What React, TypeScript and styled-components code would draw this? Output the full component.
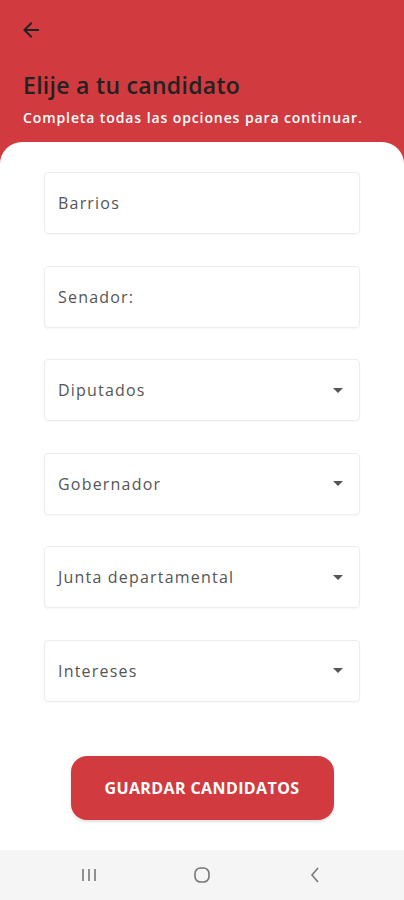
import styled, { createGlobalStyle } from 'styled-components';

const GlobalStyle = createGlobalStyle`
  * { box-sizing: border-box; }
  body {
    margin: 0;
    font-family: "Open Sans", "Liberation Sans", sans-serif;
    background: #d13b3f;
  }
`;

const fields = [
  { label: 'Barrios', select: false },
  { label: 'Senador:', select: false },
  { label: 'Diputados', select: true },
  { label: 'Gobernador', select: true },
  { label: 'Junta departamental', select: true },
  { label: 'Intereses', select: true },
];

const App = () => {
  return (
    <Screen>
      <GlobalStyle />
      <Header>
        <BackButton aria-label="Volver">
          <svg width="24" height="24" viewBox="0 0 24 24">
            <path d="M20 11H7.83l5.59-5.59L12 4l-8 8 8 8 1.41-1.41L7.83 13H20v-2z" fill="#222" />
          </svg>
        </BackButton>
        <Title>Elije a tu candidato</Title>
        <Subtitle>Completa todas las opciones para continuar.</Subtitle>
      </Header>
      <Card>
        <FieldList>
          {fields.map((f) => (
            <Field key={f.label}>
              <FieldLabel>{f.label}</FieldLabel>
              {f.select && <Caret />}
            </Field>
          ))}
        </FieldList>
        <SaveButton>GUARDAR CANDIDATOS</SaveButton>
      </Card>
      <NavBar>
        <svg width="18" height="16" viewBox="0 0 18 16">
          <path d="M3 2v12M9 2v12M15 2v12" stroke="#777" strokeWidth="1.6" fill="none" />
        </svg>
        <svg width="18" height="18" viewBox="0 0 18 18">
          <rect x="2" y="2" width="14" height="14" rx="5.5" stroke="#777" strokeWidth="1.6" fill="none" />
        </svg>
        <svg width="18" height="18" viewBox="0 0 18 18">
          <path d="M12 2L6 9l6 7" stroke="#777" strokeWidth="1.6" fill="none" />
        </svg>
      </NavBar>
    </Screen>
  );
};

const Screen = styled.div`
  width: 404px;
  height: 900px;
  display: flex;
  flex-direction: column;
  background: #d13b3f;
`;

const Header = styled.header`
  padding: 18px 23px 0;
  height: 142px;
  display: flex;
  flex-direction: column;
`;

const BackButton = styled.button`
  background: none;
  border: none;
  padding: 0;
  margin-left: -4px;
  width: 24px;
  height: 24px;
  display: flex;
`;

const Title = styled.h1`
  margin: 28px 0 0;
  font-size: 23px;
  font-weight: 600;
  color: #222;
  line-height: 30px;
  letter-spacing: 0.3px;
`;

const Subtitle = styled.p`
  margin: 9px 0 0;
  font-size: 14px;
  font-weight: 600;
  color: #fff;
  line-height: 18px;
  letter-spacing: 0.9px;
`;

const Card = styled.main`
  flex: 1;
  background: #fff;
  border-radius: 22px 22px 0 0;
  display: flex;
  flex-direction: column;
  align-items: center;
  padding: 30px 0 0;
`;

const FieldList = styled.div`
  width: 316px;
  display: flex;
  flex-direction: column;
  gap: 31.5px;
`;

const Field = styled.div`
  height: 62px;
  border: 1px solid #ececec;
  border-radius: 4px;
  box-shadow: 0 1px 2px rgba(0, 0, 0, 0.04);
  display: flex;
  align-items: center;
  justify-content: space-between;
  padding: 0 16px 0 13px;
`;

const FieldLabel = styled.span`
  font-size: 16px;
  color: #555;
  letter-spacing: 1.2px;
`;

const Caret = styled.span`
  width: 0;
  height: 0;
  border-left: 5px solid transparent;
  border-right: 5px solid transparent;
  border-top: 5px solid #555;
`;

const SaveButton = styled.button`
  margin-top: 54px;
  width: 263px;
  height: 64px;
  border: none;
  border-radius: 16px;
  background: #d13b3f;
  color: #fff;
  font-family: "Open Sans", "Liberation Sans", sans-serif;
  font-size: 16px;
  font-weight: 700;
  letter-spacing: 0.4px;
  box-shadow: 0 2px 3px rgba(0, 0, 0, 0.12);
`;

const NavBar = styled.nav`
  height: 50px;
  background: #f5f5f5;
  display: flex;
  align-items: center;
  justify-content: center;
  gap: 95px;
`;

export default App;
